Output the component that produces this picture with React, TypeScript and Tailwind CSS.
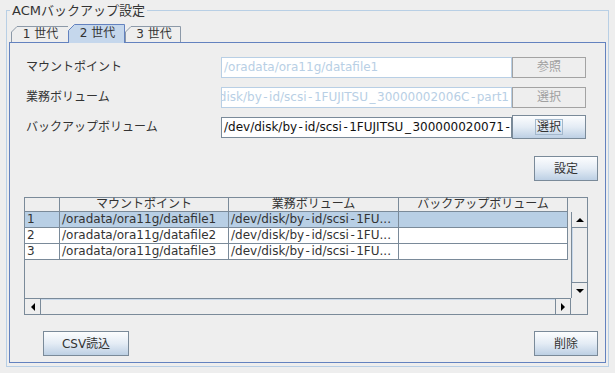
const rows = [
  { no: '1', mount: '/oradata/ora11g/datafile1', vol: '/dev/disk/by-id/scsi-1FU...', backup: '' },
  { no: '2', mount: '/oradata/ora11g/datafile2', vol: '/dev/disk/by-id/scsi-1FU...', backup: '' },
  { no: '3', mount: '/oradata/ora11g/datafile3', vol: '/dev/disk/by-id/scsi-1FU...', backup: '' },
];

// hyphens and underscores are drawn wider in the original UI font
function Path({ text }: { text: string }) {
  return (
    <>
      {text.split(/([-_])/).map((p, i) =>
        p === '-' || p === '_' ? (
          <span key={i} className="mx-[1.5px]">
            {p}
          </span>
        ) : (
          p
        ),
      )}
    </>
  );
}

function Tab({ label, selected, last, width }: { label: string; selected?: boolean; last?: boolean; width: number }) {
  const h = selected ? 19 : 16;
  const d = selected
    ? `M0.5 ${h} V6.5 L6.5 0.5 H${width - 0.5} V${h}`
    : `M0.5 ${h} V6 L6 0.5 H${last ? width - 0.5 : width}${last ? ` V${h}` : ''}`;
  return (
    <div
      className={`relative flex items-center justify-center pl-[2px] ${selected ? 'z-10 -mb-px h-[19px] pb-[1px]' : 'h-[16px]'}`}
      style={{ width }}
    >
      <svg className="absolute inset-0" width={width} height={h}>
        <path
          d={d}
          fill={selected ? '#c5d7ec' : '#eeeeee'}
          stroke={selected ? '#6382bf' : '#8c99a8'}
          strokeWidth="1"
        />
      </svg>
      <span className="relative leading-[14px]">{label}</span>
    </div>
  );
}

function OceanButton({ label, focus, className = '' }: { label: string; focus?: boolean; className?: string }) {
  return (
    <button
      className={`flex items-center justify-center border border-[#7a8a99] bg-linear-to-b from-[#fcfdfe] via-[#e4ecf5] to-[#bdd0e4] text-[#333333] ${className}`}
    >
      <span className={focus ? 'border border-[#a3b8cc] px-[1px] leading-[14px]' : 'leading-[14px]'}>{label}</span>
    </button>
  );
}

function DisabledButton({ label }: { label: string }) {
  return (
    <button className="flex h-[21px] w-[74px] items-center justify-center border border-[#a3a3a3] bg-[#eeeeee] text-[#a0a0a0]">
      {label}
    </button>
  );
}

function Arrow({ dir }: { dir: 'up' | 'down' | 'left' | 'right' }) {
  const pts = {
    up: '0,4 8,4 4,0',
    down: '0,0 8,0 4,4',
    left: '4,0 4,8 0,4',
    right: '0,0 0,8 4,4',
  }[dir];
  const vertical = dir === 'up' || dir === 'down';
  return (
    <svg width={vertical ? 8 : 4} height={vertical ? 4 : 8}>
      <polygon points={pts} fill="#000000" />
    </svg>
  );
}

export default function App() {
  return (
    <div className="h-[373px] w-[615px] overflow-hidden bg-[#eeeeee] font-['DejaVu_Sans','Noto_Sans_CJK_JP',sans-serif] text-[12px] text-[#333333]">
      <fieldset className="ml-[6px] mt-[3px] w-[603px] border border-[#b8cfe5] pb-[3px]">
        <legend className="ml-[3px] px-[2px] text-[13px] leading-[15px]">ACMバックアップ設定</legend>

        <div className="ml-[4px] mt-[6px] flex h-[18px] items-end">
          <Tab label="1 世代" width={57} />
          <Tab label="2 世代" width={57} selected />
          <Tab label="3 世代" width={56} last />
        </div>

        <div className="ml-[2px] w-[597px] border border-[#6382bf]">
          <div className="grid grid-cols-[195px_291px_74px] pl-[16px] pt-[9px]">
            <div className="flex h-[30px] items-center">マウントポイント</div>
            <div className="flex min-w-0 items-center">
              <div className="flex h-[21px] w-full min-w-0 items-center overflow-hidden whitespace-nowrap border border-[#b8cfe5] bg-white px-[2px] text-[#b8cfe5]">
                /oradata/ora11g/datafile1
              </div>
            </div>
            <div className="flex items-center">
              <DisabledButton label="参照" />
            </div>

            <div className="flex h-[30px] items-center">業務ボリューム</div>
            <div className="flex min-w-0 items-center">
              <div className="flex h-[21px] w-full min-w-0 items-center justify-end overflow-hidden whitespace-nowrap border border-[#b8cfe5] bg-white px-[2px] text-[#b8cfe5]">
                <span className="shrink-0">
                  <Path text="/dev/disk/by-id/scsi-1FUJITSU_30000002006C-part1" />
                </span>
              </div>
            </div>
            <div className="flex items-center">
              <DisabledButton label="選択" />
            </div>

            <div className="flex h-[30px] items-center">バックアップボリューム</div>
            <div className="flex min-w-0 items-center">
              <div className="flex h-[21px] w-full min-w-0 items-center overflow-hidden whitespace-nowrap border border-[#7a8a99] bg-white px-[2px] text-[#111111]">
                <span className="shrink-0">
                  <Path text="/dev/disk/by-id/scsi-1FUJITSU_300000020071-part1" />
                </span>
              </div>
            </div>
            <div className="flex items-center">
              <OceanButton label="選択" focus className="h-[24px] w-[74px]" />
            </div>
          </div>

          <div className="mt-[14px] flex justify-end pr-[7px]">
            <OceanButton label="設定" className="h-[25px] w-[64px]" />
          </div>

          <div className="ml-[14px] mt-[16px] flex h-[118px] w-[564px] flex-col border border-[#7a8a99]">
            <div className="flex h-[14px]">
              <div className="flex w-[546px] bg-[#eeeeee]">
                <div className="w-[35px] border-b border-r border-[#7a8a99]" />
                <div className="w-[169px] border-b border-r border-[#7a8a99] text-center leading-[13px]">マウントポイント</div>
                <div className="w-[170px] border-b border-r border-[#7a8a99] text-center leading-[13px]">業務ボリューム</div>
                <div className="w-[169px] border-b border-r border-[#7a8a99] text-center leading-[13px]">バックアップボリューム</div>
              </div>
              <div className="w-[16px]" />
            </div>

            <div className="flex h-[86px]">
              <div className="w-[546px] bg-[#eeeeee]">
                {rows.map((r, i) => (
                  <div key={r.no} className={`flex h-[16px] w-[543px] ${i === 0 ? 'bg-[#b8cfe5]' : 'bg-white'}`}>
                    <div className="w-[35px] overflow-hidden whitespace-nowrap border-b border-r border-[#7a8a99] pl-[2px] leading-[15px]">{r.no}</div>
                    <div className="w-[169px] overflow-hidden whitespace-nowrap border-b border-r border-[#7a8a99] pl-[2px] leading-[15px]">{r.mount}</div>
                    <div className="w-[170px] overflow-hidden whitespace-nowrap border-b border-r border-[#7a8a99] pl-[2px] leading-[15px]">
                      <Path text={r.vol} />
                    </div>
                    <div className="w-[169px] overflow-hidden whitespace-nowrap border-b border-r border-[#7a8a99] pl-[2px] leading-[15px]">{r.backup}</div>
                  </div>
                ))}
              </div>
              <div className="flex w-[16px] flex-col border-l border-[#7a8a99]">
                <div className="flex h-[16px] items-center justify-center border-b border-[#7a8a99] bg-[#eeeeee]">
                  <Arrow dir="up" />
                </div>
                <div className="flex-1 border-l border-[#c8d8ea] bg-[#eeeeee]" />
                <div className="flex h-[16px] items-center justify-center border-t border-[#7a8a99] bg-[#eeeeee]">
                  <Arrow dir="down" />
                </div>
              </div>
            </div>

            <div className="flex h-[16px]">
              <div className="flex w-[546px] border-t border-[#7a8a99]">
                <div className="flex w-[16px] items-center justify-center border-r border-[#7a8a99]">
                  <Arrow dir="left" />
                </div>
                <div className="flex-1 border-t border-[#c8d8ea]" />
                <div className="flex w-[16px] items-center justify-center border-l border-r border-[#7a8a99]">
                  <Arrow dir="right" />
                </div>
              </div>
              <div className="w-[16px]" />
            </div>
          </div>

          <div className="mt-[16px] flex items-center justify-between pb-[6px] pl-[33px] pr-[7px]">
            <OceanButton label="CSV読込" className="h-[25px] w-[86px]" />
            <OceanButton label="削除" className="h-[25px] w-[64px]" />
          </div>
        </div>
      </fieldset>
    </div>
  );
}
